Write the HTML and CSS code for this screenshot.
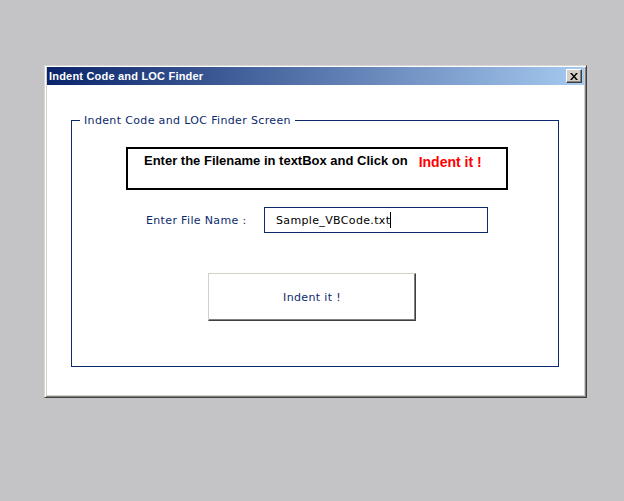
FILE: index.html
```html
<!DOCTYPE html>
<html>
<head>
<meta charset="utf-8">
<link rel="stylesheet" href="styles.css">
</head>
<body>
<div class="desktop">
  <div class="window">
    <div class="titlebar">
      <span class="title">Indent Code and LOC Finder</span>
      <button class="close" aria-label="Close">
        <svg width="8" height="7" viewBox="0 0 8 7"><path d="M0 0h2l2 2.5L6 0h2L5 3.5 8 7H6L4 4.5 2 7H0l3-3.5z" fill="#000"/></svg>
      </button>
    </div>
    <div class="client">
      <fieldset class="group">
        <legend class="legend">Indent Code and LOC Finder Screen</legend>
        <div class="notice">
          <span class="notice-text">Enter the Filename in textBox and Click on</span>
          <span class="notice-red">Indent it !</span>
        </div>
        <div class="field-row">
          <label class="field-label">Enter File Name :</label>
          <div class="textbox"><span>Sample_VBCode.txt</span><span class="caret"></span></div>
        </div>
        <div class="button-row">
          <button class="action">Indent it !</button>
        </div>
      </fieldset>
    </div>
  </div>
</div>
</body>
</html>
```

FILE: styles.css
```css
html, body {
  margin: 0;
  padding: 0;
}
body {
  background: #c4c3c6;
  width: 624px;
  height: 501px;
  overflow: hidden;
}
.desktop {
  padding: 65px 0 0 44px;
}
.window {
  width: 543px;
  height: 333px;
  box-sizing: border-box;
  border: 1px solid;
  border-color: #d8d6d2 #404040 #404040 #d8d6d2;
  box-shadow: inset 1px 1px #ffffff, inset -1px -1px #808080, inset 2px 2px #d4d0c8, inset -2px -2px #d4d0c8;
  background: #ffffff;
  padding: 1px 2px 2px 2px;
  display: flex;
  flex-direction: column;
}
.titlebar {
  height: 18px;
  background: linear-gradient(to right, #0a246a, #a6caf0);
  display: flex;
  align-items: center;
  justify-content: space-between;
  padding: 0 2px 0 2px;
}
.title {
  font-family: "Liberation Sans", Arial, sans-serif;
  font-weight: bold;
  font-size: 11px;
  letter-spacing: 0.2px;
  color: #ffffff;
}
.close {
  width: 16px;
  height: 14px;
  padding: 0;
  margin: 0;
  background: #d4d0c8;
  border: 1px solid;
  border-color: #ffffff #404040 #404040 #ffffff;
  box-shadow: inset -1px -1px #808080;
  display: flex;
  align-items: center;
  justify-content: center;
}
.client {
  flex: 1;
  background: #ffffff;
  padding: 28px 24px 0 24px;
}
.group {
  margin: 0;
  padding: 0;
  border: 1px solid #0c2a6e;
  width: 488px;
  height: 254px;
  box-sizing: border-box;
  display: flex;
  flex-direction: column;
  align-items: flex-start;
}
.legend {
  margin-left: 8px;
  padding: 0 4px;
  font-family: "DejaVu Sans", Verdana, sans-serif;
  font-size: 11px;
  letter-spacing: 0.35px;
  color: #0c2a6e;
  line-height: 14px;
  position: relative;
  top: 1px;
}
.notice {
  margin: 20px 0 0 54px;
  width: 382px;
  height: 43px;
  box-sizing: border-box;
  border: 2px solid #000000;
  padding: 4px 0 0 16px;
  display: flex;
  align-items: flex-start;
}
.notice-text {
  font-family: "Liberation Sans", Arial, sans-serif;
  font-weight: bold;
  font-size: 13px;
  color: #000000;
}
.notice-red {
  font-family: "Liberation Sans", Arial, sans-serif;
  font-weight: bold;
  font-size: 14px;
  color: #ff0000;
  margin: 1px 0 0 11px;
}
.field-row {
  margin: 17px 0 0 74px;
  display: flex;
  align-items: center;
}
.field-label {
  font-family: "DejaVu Sans", Verdana, sans-serif;
  font-size: 11px;
  letter-spacing: 0.35px;
  color: #0c2a6e;
  width: 118px;
}
.textbox {
  width: 224px;
  height: 26px;
  box-sizing: border-box;
  border: 1px solid #0c2a6e;
  padding: 0 0 0 11px;
  display: flex;
  align-items: center;
  font-family: "DejaVu Sans", Verdana, sans-serif;
  font-size: 11px;
  letter-spacing: 0.35px;
  color: #000000;
}
.caret {
  width: 1px;
  height: 16px;
  background: #000000;
}
.button-row {
  margin: 40px 0 0 136px;
}
.action {
  width: 208px;
  height: 48px;
  margin: 0;
  padding: 0;
  background: #ffffff;
  border: 1px solid;
  border-color: #d4d0c8 #404040 #404040 #d4d0c8;
  box-shadow: inset -1px -1px #808080;
  font-family: "DejaVu Sans", Verdana, sans-serif;
  font-size: 11px;
  letter-spacing: 0.35px;
  color: #0c2a6e;
}
```
